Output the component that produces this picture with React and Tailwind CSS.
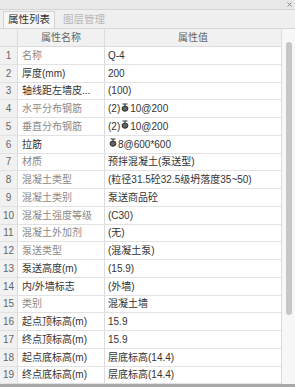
import React from 'react';

// HRB400 rebar mark
function Rebar() {
  return (
    <svg width="8" height="9" viewBox="0 0 8 9" className="inline-block mx-[1px] -mt-[3px] align-middle">
      <path d="M1.5 1 H6.5 M4 0.5 V8.8" stroke="#333" strokeWidth="1.1" fill="none" />
      <ellipse cx="4" cy="5.6" rx="2.8" ry="2.4" stroke="#333" strokeWidth="1.1" fill="#666" />
    </svg>
  );
}

const rows = [
  { name: '名称', dim: true, value: 'Q-4' },
  { name: '厚度(mm)', value: '200' },
  { name: '轴线距左墙皮...', value: '(100)' },
  { name: '水平分布钢筋', dim: true, value: ['(2)', 'R', '10@200'] },
  { name: '垂直分布钢筋', dim: true, value: ['(2)', 'R', '10@200'] },
  { name: '拉筋', value: ['R', '8@600*600'] },
  { name: '材质', dim: true, value: '预拌混凝土(泵送型)' },
  { name: '混凝土类型', dim: true, value: '(粒径31.5砼32.5级坍落度35~50)' },
  { name: '混凝土类别', dim: true, value: '泵送商品砼' },
  { name: '混凝土强度等级', dim: true, value: '(C30)' },
  { name: '混凝土外加剂', dim: true, value: '(无)' },
  { name: '泵送类型', dim: true, value: '(混凝土泵)' },
  { name: '泵送高度(m)', value: '(15.9)' },
  { name: '内/外墙标志', value: '(外墙)' },
  { name: '类别', dim: true, value: '混凝土墙' },
  { name: '起点顶标高(m)', value: '15.9' },
  { name: '终点顶标高(m)', value: '15.9' },
  { name: '起点底标高(m)', value: '层底标高(14.4)' },
  { name: '终点底标高(m)', value: '层底标高(14.4)' },
];

function Value({ v }) {
  if (typeof v === 'string') return v;
  return v.map((p, i) => (p === 'R' ? <Rebar key={i} /> : <span key={i}>{p}</span>));
}

export default function App() {
  return (
    <div
      className="w-[295px] h-[387px] bg-white overflow-hidden flex flex-col text-[10px] text-[#333]"
      style={{ fontFamily: '"Liberation Sans", "Noto Sans CJK SC", sans-serif' }}
    >
      <div className="h-[10px] shrink-0 bg-[#e8e8e8] border-b border-[#d6d6d6] flex justify-end items-center pr-[3px]">
        <svg width="5" height="5" viewBox="0 0 5 5">
          <path d="M0.5 0.5 L4.5 4.5 M4.5 0.5 L0.5 4.5" stroke="#888" strokeWidth="1" />
        </svg>
      </div>

      <div className="h-[19px] shrink-0 bg-[#efefef] border-b border-[#d8d8d8] flex items-end pl-[3px]">
        <div className="h-[17px] px-[4px] flex items-center bg-[#f6f6f6] border border-b-0 border-[#d4d4d4] text-[#333] text-[10.5px]">
          属性列表
        </div>
        <div className="h-[17px] px-[8px] flex items-center text-[#b8b8b8] text-[10.5px]">图层管理</div>
      </div>

      <div className="flex flex-1 min-h-0">
        <div className="w-[282px] flex flex-col border-r border-[#dcdcdc]">
          <div className="h-[18px] shrink-0 flex bg-[#f1f1f1] border-b border-[#dcdcdc] text-[#666]">
            <div className="w-[18px] border-r border-[#dcdcdc]" />
            <div className="w-[87px] border-r border-[#dcdcdc] flex items-center justify-center">属性名称</div>
            <div className="flex-1 flex items-center justify-center">属性值</div>
          </div>
          {rows.map((r, i) => (
            <div key={i} className="h-[17.75px] shrink-0 flex border-b border-[#e2e2e2]">
              <div className="w-[18px] bg-[#f1f1f1] border-r border-[#dcdcdc] flex items-center justify-center text-[#666]">
                {i + 1}
              </div>
              <div
                className={`w-[87px] border-r border-[#dcdcdc] flex items-center pl-[4px] whitespace-nowrap ${
                  r.dim ? 'text-[#8a8a8a]' : 'text-[#333]'
                }`}
              >
                {r.name}
              </div>
              <div className="flex-1 flex items-center pl-[3px] whitespace-nowrap">
                <Value v={r.value} />
              </div>
            </div>
          ))}
        </div>
        <div className="flex-1 bg-[#f7f7f7] pt-[13px] flex justify-center">
          <div className="w-[6px] h-[273px] rounded-full bg-[#c6c6c6]" />
        </div>
      </div>
      <div className="h-[3px] shrink-0 bg-[#a8a8a8]" />
    </div>
  );
}
